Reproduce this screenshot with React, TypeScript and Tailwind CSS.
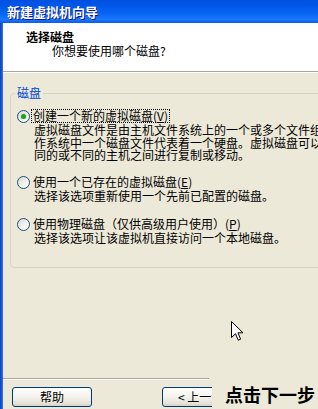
import React from "react";

function Radio({ checked }: { checked?: boolean }) {
  return (
    <div className="mt-[1px] ml-[2px] w-[13px] h-[13px] shrink-0 rounded-full border border-[#1C5180] bg-[linear-gradient(135deg,#DCD9CF_0%,#F4F3EE_60%,#FFFFFF_100%)] flex items-center justify-center">
      {checked && <div className="w-[5px] h-[5px] rounded-full bg-[#21A121] shadow-[0_0_1px_#5BC85B]" />}
    </div>
  );
}

function Option({
  label,
  mnemonic,
  lines,
  checked,
  focus,
  className,
}: {
  label: string;
  mnemonic: string;
  lines: string[];
  checked?: boolean;
  focus?: boolean;
  className?: string;
}) {
  return (
    <div className={"flex items-start " + (className ?? "")}>
      <Radio checked={checked} />
      <div className="ml-[1px] flex flex-col">
        <div
          className={
            "self-start leading-[12px] px-[1px] border border-dotted whitespace-nowrap " +
            (focus ? "border-black" : "border-transparent")
          }
        >
          {label}(<span className="underline">{mnemonic}</span>)
        </div>
        <div className="mt-[1px] pl-[3px] flex flex-col">
          {lines.map((l, i) => (
            <div key={i} className="leading-[12.5px] whitespace-nowrap">
              {l}
            </div>
          ))}
        </div>
      </div>
    </div>
  );
}

const btnBase =
  "h-[20px] rounded-[3px] border border-[#003C74] bg-[linear-gradient(180deg,#FFFFFF_0%,#F3F2EC_50%,#E6E3D8_85%,#D6D0C5_100%)] flex items-center text-[12px] leading-[14px] text-black shrink-0 whitespace-nowrap";

export default function App() {
  return (
    <div className="relative w-[318px] h-[409px] overflow-hidden flex flex-col bg-[#ECE9D8] text-black text-[12px] [font-family:'Noto_Sans_CJK_SC','Noto_Sans',sans-serif]">
      {/* Title bar */}
      <div className="h-[23px] shrink-0 flex items-center pl-[7px] bg-[linear-gradient(180deg,#0050E0_0%,#0058EA_30%,#0A68F4_65%,#1C78FA_85%,#0A5CE4_100%)]">
        <span className="text-white font-bold text-[13px] leading-[15px] [text-shadow:1px_1px_#0A1A8A]">
          新建虚拟机向导
        </span>
      </div>

      <div className="flex-1 flex min-h-0">
        {/* left frame */}
        <div className="w-[3px] shrink-0 bg-[linear-gradient(90deg,#0840C8_0%,#1D5ED8_60%,#3A74E0_100%)]" />

        <div className="relative flex-1 min-w-0 flex flex-col">
          {/* Header */}
          <div className="h-[48px] shrink-0 bg-white pt-[7px]">
            <div className="pl-[23px] font-bold leading-[14px]">选择磁盘</div>
            <div className="pl-[49px] leading-[14px]">你想要使用哪个磁盘?</div>
          </div>
          <div className="h-px bg-[#ACA899] shrink-0" />
          <div className="h-px bg-white shrink-0" />

          {/* Group box */}
          <fieldset className="mt-[13px] ml-[7px] w-[340px] h-[182px] shrink-0 border border-[#D6D3C4] rounded-[4px] pl-[4px]">
            <legend className="px-[2px] leading-[14px] text-[#0046D5]">磁盘</legend>
            <Option
              className="mt-[9px]"
              checked
              focus
              label="创建一个新的虚拟磁盘"
              mnemonic="V"
              lines={[
                "虚拟磁盘文件是由主机文件系统上的一个或多个文件组成，",
                "作系统中一个磁盘文件代表着一个硬盘。虚拟磁盘可以很容易地",
                "同的或不同的主机之间进行复制或移动。",
              ]}
            />
            <Option
              className="mt-[13px]"
              label="使用一个已存在的虚拟磁盘"
              mnemonic="E"
              lines={["选择该选项重新使用一个先前已配置的磁盘。"]}
            />
            <Option
              className="mt-[15px]"
              label="使用物理磁盘（仅供高级用户使用）"
              mnemonic="P"
              lines={["选择该选项让该虚拟机直接访问一个本地磁盘。"]}
            />
          </fieldset>

          {/* Footer */}
          <div className="mt-auto shrink-0">
            <div className="flex">
              <div className="w-[206px] h-px bg-[#ACA899]" />
            </div>
            <div className="flex">
              <div className="w-[206px] h-px bg-white" />
            </div>
            <div className="flex items-start mt-[7px] h-[22px] pl-[9px]">
              <div className={btnBase + " w-[80px] justify-center"}>帮助</div>
              <div className="ml-[70px] w-[50px] h-[20px] overflow-hidden shrink-0">
                <div className={btnBase + " w-[75px] pl-[15px]"}>
                  &lt; 上一步(<span className="underline">B</span>)
                </div>
              </div>
              <div className="ml-[13px] -mt-[4px] font-bold text-[18px] leading-[22px] whitespace-nowrap text-black">
                点击下一步
              </div>
            </div>
          </div>
        </div>
      </div>

      {/* Mouse cursor */}
      <svg className="absolute left-[231px] top-[321px]" width="13" height="21" viewBox="0 0 13 21">
        <path
          d="M0.5 0.5 L0.5 16.5 L4.5 12.7 L7.2 19.2 L9.6 18.2 L7 11.8 L12 11.8 Z"
          fill="white"
          stroke="black"
          strokeWidth="1"
          strokeLinejoin="miter"
        />
      </svg>
    </div>
  );
}
